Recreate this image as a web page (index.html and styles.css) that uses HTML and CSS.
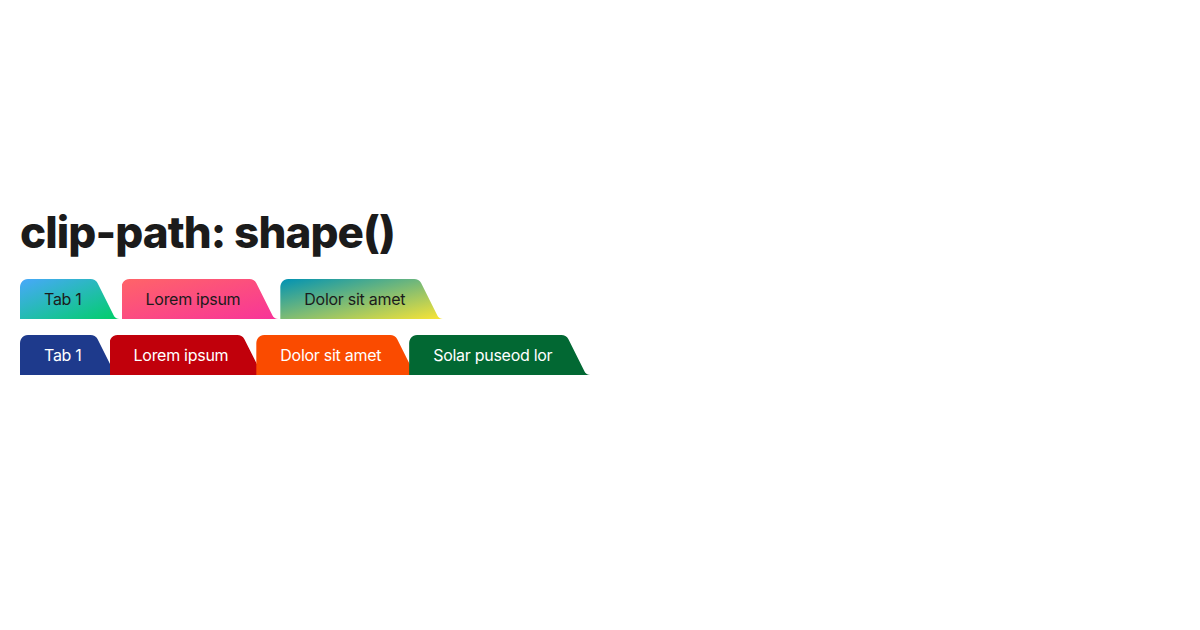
FILE: index.html
```html
<!DOCTYPE html>
<html lang="en">
<head>
<meta charset="utf-8">
<title>clip-path: shape()</title>
<link rel="stylesheet" href="styles.css">
</head>
<body>
<main class="page">
  <h1 class="title">clip-path: shape()</h1>
  <div class="tabs tabs-gradient">
    <div class="tab g-blue">Tab 1</div>
    <div class="tab g-pink">Lorem ipsum</div>
    <div class="tab g-teal">Dolor sit amet</div>
  </div>
  <div class="tabs tabs-solid">
    <div class="tab s-blue">Tab 1</div>
    <div class="tab s-red">Lorem ipsum</div>
    <div class="tab s-orange">Dolor sit amet</div>
    <div class="tab s-green">Solar puseod lor</div>
  </div>
</main>
</body>
</html>
```
FILE: styles.css
```css
html, body {
  margin: 0;
  padding: 0;
  background: #ffffff;
}
body {
  font-family: Inter, "Noto Sans", "Liberation Sans", sans-serif;
  color: #1b1b1b;
}
.page {
  padding: 206px 20px 0 20px;
  display: flex;
  flex-direction: column;
  align-items: flex-start;
}
.title {
  margin: 0 0 20px 0;
  font-size: 44px;
  font-weight: 800;
  letter-spacing: -0.93px;
  line-height: 53px;
  color: #1b1b1b;
}
.tabs {
  display: flex;
  align-items: flex-end;
}
.tabs-gradient {
  gap: 2px;
  margin-bottom: 16px;
}
.tabs-solid .tab + .tab {
  margin-left: -10px;
}
.tab {
  height: 40px;
  box-sizing: border-box;
  padding: 0 38px 0 24px;
  display: flex;
  align-items: center;
  font-size: 16px;
  letter-spacing: -0.28px;
  line-height: 1;
  white-space: nowrap;
  clip-path: polygon(
    0 40px,
    0 8px,
    0.27px 5.93px,
    1.07px 4px,
    2.34px 2.34px,
    4px 1.07px,
    5.93px 0.27px,
    8px 0,
    calc(100% - 28.94px) 0,
    calc(100% - 26.87px) 0.27px,
    calc(100% - 24.94px) 1.07px,
    calc(100% - 23.28px) 2.34px,
    calc(100% - 22.36px) 3.4px,
    calc(100% - 21.78px) 4.42px,
    calc(100% - 5.66px) 36.68px,
    calc(100% - 5.05px) 37.7px,
    calc(100% - 4.2px) 38.6px,
    calc(100% - 3.2px) 39.3px,
    calc(100% - 1.8px) 39.8px,
    calc(100% - 0.3px) 40px
  );
}
.tabs-gradient .tab { color: #1b1b1b; }
.tabs-solid .tab { color: #ffffff; }

.g-blue { background: linear-gradient(to bottom right, #48a8fb, #00cf68); }
.g-pink { background: linear-gradient(to bottom right, #ff6468, #f83499); }
.g-teal { background: linear-gradient(to bottom right, #0092b4, #fbe534); }

.s-blue { background: #1e3a8c; }
.s-red { background: #c1000b; }
.s-orange { background: #fa4b00; }
.s-green { background: #026833; }
```
